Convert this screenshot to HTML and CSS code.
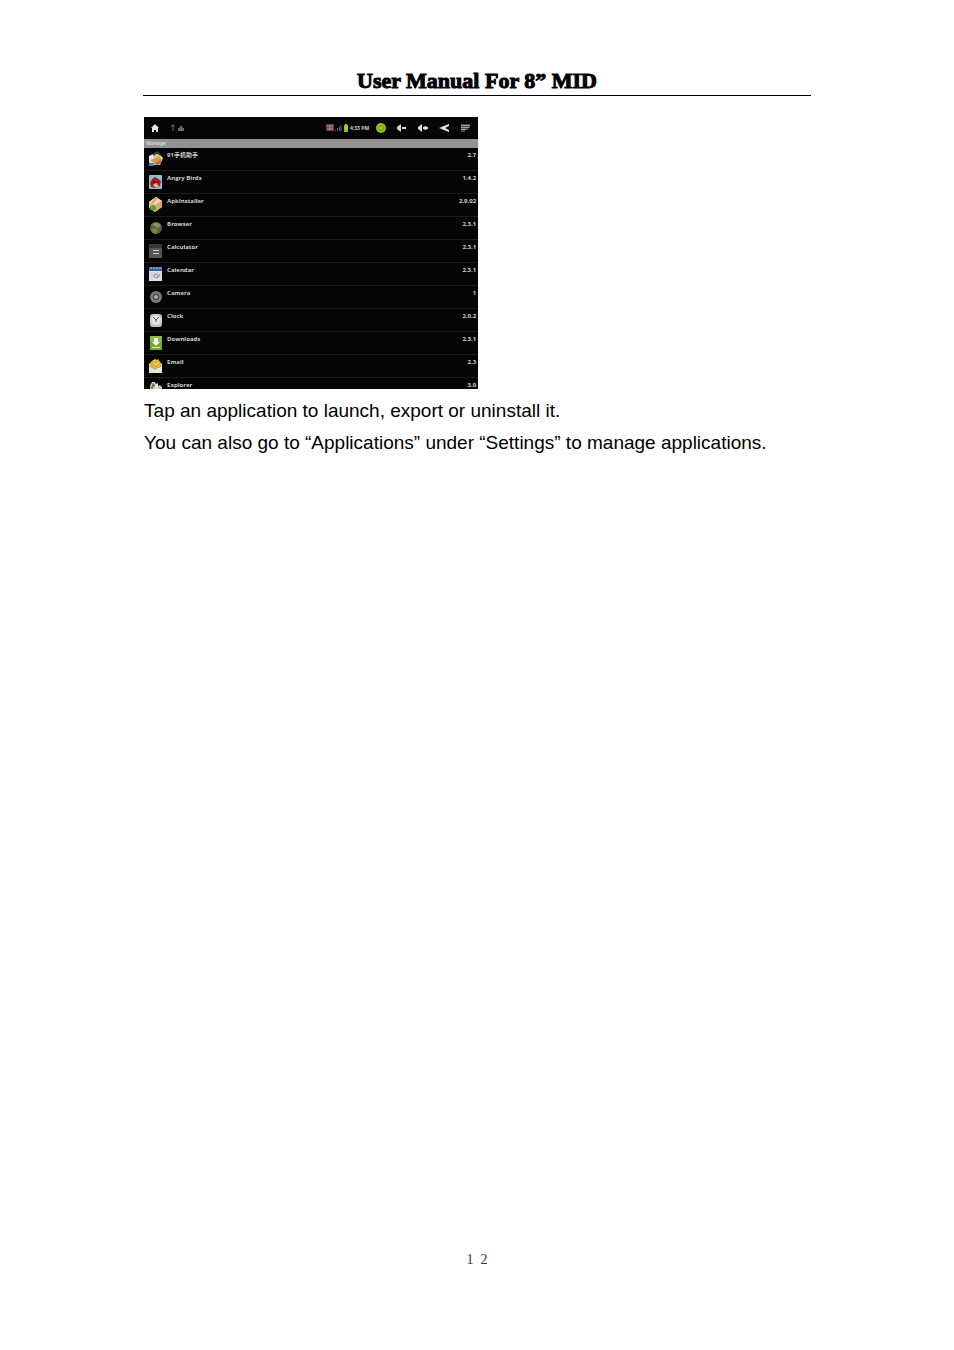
FILE: index.html
```
<!DOCTYPE html>
<html lang="en">
<head>
    <meta charset="UTF-8">
    <meta name="viewport" content="width=device-width, initial-scale=1.0">
    <title>User Manual For 8” MID</title>
    <link rel="stylesheet" href="styles.css">
</head>
<body>

    <header>
        <h1>User Manual For 8” MID</h1>
    </header>

    <main>
        <!-- Application manager -->
        <div class="screen">
            <div class="top-bar">
                <button type="button" aria-label="Home">
                    <svg viewBox="0 0 12 12"><path d="M6 2 L10 6 H9 V10 H7 V8 H5 V10 H3 V6 H2 Z" fill="#e4e4e4"/></svg>
                </button>
                <div class="notices">
                    <svg viewBox="0 0 8 12"><path d="M4 3 V9 M2 4 H6 M3 3 H5" stroke="#606060" fill="none"/></svg>
                    <svg viewBox="0 0 8 12"><path d="M4 3 L6 6 H7 V9 H1 V6 H2 Z" fill="#686868"/></svg>
                </div>
                <div class="status">
                    <svg viewBox="0 0 9 12"><rect x="1" y="2" width="8" height="7" rx="1" fill="#6b3f42"/><path d="M2 4 H8 M2 7 H8 M5 3 V8" stroke="#b08c8c"/></svg>
                    <svg viewBox="0 0 8 12"><path d="M1.500 9 V8 M3.500 9 V6 M5.500 9 V5 M7 9 V3" stroke="#666"/></svg>
                    <svg viewBox="0 0 8 12"><path d="M3 2 H5 V3 H6 V10 H2 V3 H3 Z" fill="#8cc81c"/><path d="M3 6 H5" stroke="#c5ec61"/></svg>
                    <span>4:33 PM</span>
                </div>
                <div class="controls">
                    <button type="button" aria-label="Task manager">
                        <svg viewBox="0 0 12 12"><circle cx="6" cy="6" r="5" fill="#8fc31b"/><circle cx="6" cy="6" r="2.500" fill="none" stroke="#6f9d18"/><path d="M5 6 H7" stroke="#b9dc57"/></svg>
                    </button>
                    <button type="button" aria-label="Volume down">
                        <svg viewBox="0 0 12 12"><path d="M1 5 L5 2 V10 L1 7 Z" fill="#dedede"/><path d="M6 6 H10" stroke="#dedede" stroke-width="2"/></svg>
                    </button>
                    <button type="button" aria-label="Volume up">
                        <svg viewBox="0 0 12 12"><path d="M1 5 L5 2 V10 L1 7 Z" fill="#dedede"/><path d="M6 6 H11 M8.500 4 V8" stroke="#dedede" stroke-width="2"/></svg>
                    </button>
                    <button type="button" aria-label="Back">
                        <svg viewBox="0 0 12 12"><path d="M11 2 L1 6 L11 10 V8 L7 6 L11 4 Z" fill="#e8e8e8"/></svg>
                    </button>
                    <button type="button" aria-label="Menu">
                        <svg viewBox="0 0 12 12"><path d="M2 2 H11 V6 H9 V8 H6 V10 H2 Z" fill="#4a4a4a"/><path d="M2 3.500 H11 M2 5.500 H10 M2 7.500 H7" stroke="#a0a0a0"/></svg>
                    </button>
                </div>
            </div>
            <div class="title-bar">Manage</div>
            <table>
                <tr>
                    <td class="icon"><svg viewBox="0 0 15 15"><path d="M1 5 L9 1 L15 7 L12 14 H3 L1 11 Z" fill="#dfe3e6"/><path d="M4 3 L10 0 L13 4 L8 7 Z" fill="#303b48"/><circle cx="9" cy="6" r="3" fill="#e5b981"/><path d="M2 9 L12 6 L14 9 L6 12 Z" fill="#d59b35"/><path d="M1 12 H6 V15 H1 Z" fill="#3f86bd"/><path d="M6 12 L13 9 V13 L8 14 Z" fill="#b56659"/></svg></td>
                    <td>91手机助手</td>
                    <td class="version">2.7</td>
                </tr>
                <tr>
                    <td class="icon"><svg viewBox="0 0 15 15"><rect x="1" y="1" width="13" height="14" rx="1" fill="#8fc0cc"/><path d="M2 9 L4 5 L7 3 L9 4 L13 7 L12 12 L8 14 L3 13 Z" fill="#b01727"/><path d="M5 11 L8 9 L11 12 L8 14 Z" fill="#d8bfa5"/><path d="M5 7 L8 9 L11 7" stroke="#4e1018" fill="none"/><path d="M7 9 H10 L8 11 Z" fill="#d49b2c"/></svg></td>
                    <td>Angry Birds</td>
                    <td class="version">1.4.2</td>
                </tr>
                <tr>
                    <td class="icon"><svg viewBox="0 0 15 15"><path d="M1 5 L8 0 L14 4 V10 L7 15 L1 11 Z" fill="#d8bd7e"/><path d="M1 5 L8 0 L14 4 L7 8 Z" fill="#ead8a6"/><path d="M7 8 L14 4 V10 L7 15 Z" fill="#d3aa70"/><path d="M8 0 L10 1 L5 7 L3 6 Z" fill="#d69c91"/><path d="M2 10 Q5 6 8 10 V13 H2 Z" fill="#4fa52f"/></svg></td>
                    <td>ApkInstaller</td>
                    <td class="version">2.9.02</td>
                </tr>
                <tr>
                    <td class="icon"><svg viewBox="0 0 15 15"><circle cx="8" cy="8" r="6" fill="#52653a"/><path d="M3 5 Q8 0 13 5 L10 8 L6 6 Z" fill="#868f70"/><path d="M3 9 L7 8 L10 11 L8 14 Q4 13 3 9" fill="#6e8b3e"/><path d="M4 4 L12 12" stroke="#55653f"/></svg></td>
                    <td>Browser</td>
                    <td class="version">2.3.1</td>
                </tr>
                <tr>
                    <td class="icon"><svg viewBox="0 0 15 15"><rect x="1" y="1" width="13" height="14" fill="#555"/><rect x="1" y="1" width="13" height="4" fill="#373737"/><path d="M5 7.500 H11 M5 10.500 H11" stroke="#d2d2d2"/></svg></td>
                    <td>Calculator</td>
                    <td class="version">2.3.1</td>
                </tr>
                <tr>
                    <td class="icon"><svg viewBox="0 0 15 15"><rect x="1" y="1" width="13" height="14" fill="#dce1e6"/><rect x="1" y="1" width="13" height="4" fill="#31649d"/><path d="M3 1 V3 M6 1 V3 M9 1 V3 M12 1 V3" stroke="#b9cce2"/><path d="M2 7 H13 M2 10 H13 M4 6 V14" stroke="#c8d0d9"/><circle cx="8" cy="10" r="2" fill="none" stroke="#8493a7"/><path d="M10 12 L12 8" stroke="#8493a7"/></svg></td>
                    <td>Calendar</td>
                    <td class="version">2.3.1</td>
                </tr>
                <tr>
                    <td class="icon"><svg viewBox="0 0 15 15"><circle cx="8" cy="8" r="6" fill="#777"/><circle cx="8" cy="8" r="4" fill="#464646" stroke="#868686"/><circle cx="8" cy="8" r="2" fill="#aaa"/></svg></td>
                    <td>Camera</td>
                    <td class="version">1</td>
                </tr>
                <tr>
                    <td class="icon"><svg viewBox="0 0 15 15"><rect x="2" y="2" width="12" height="13" rx="3" fill="#c4c5b8"/><circle cx="8" cy="8" r="5" fill="#e2e2d9"/><path d="M5 5 L8 8 L11 5 M8 8 V10" stroke="#55584f" fill="none"/></svg></td>
                    <td>Clock</td>
                    <td class="version">2.0.2</td>
                </tr>
                <tr>
                    <td class="icon"><svg viewBox="0 0 15 15"><rect x="2" y="1" width="12" height="14" fill="#73a72b"/><rect x="2" y="1" width="12" height="6" fill="#8cb947"/><path d="M6 3 H10 V7 H12 L8 11 L4 7 H6 Z" fill="#edf4df"/><path d="M4 12.500 H12" stroke="#dcebc1"/></svg></td>
                    <td>Downloads</td>
                    <td class="version">2.3.1</td>
                </tr>
                <tr>
                    <td class="icon"><svg viewBox="0 0 15 15"><path d="M1 6 L7 1 L14 6 V15 H1 Z" fill="#e8e5d6"/><path d="M2 5 L5 2 L7 3 L10 1 L13 5 V8 L7 11 L2 8 Z" fill="#e0b62d"/><path d="M5 4 L8 7 L11 4" stroke="#f5df73" fill="none"/><path d="M1 8 L7 11 L14 8" stroke="#aaa695" fill="none"/></svg></td>
                    <td>Email</td>
                    <td class="version">2.3</td>
                </tr>
                <tr>
                    <td class="icon"><svg viewBox="0 0 15 15"><path d="M2 5 L4 1 H7 L9 5 V13 H2 Z" fill="#c9d2bd"/><path d="M4 3 L6 2 L7 5 L5 6 Z" fill="#5b7746"/><path d="M8 3 L10 2 V9 H7 Z" fill="#e4e7df"/><path d="M10 5 L12 4 L14 6 V9 H10 Z" fill="#bec4b5"/><path d="M2 7 L5 4 V8 Z" fill="#557b38"/></svg></td>
                    <td>Explorer</td>
                    <td class="version">3.0</td>
                </tr>
            </table>
        </div>

        <p>Tap an application to launch, export or uninstall it.</p>
        <p>You can also go to “Applications” under “Settings” to manage applications.</p>
    </main>

    <footer>1&nbsp;&nbsp;2</footer>

</body>
</html>
```

FILE: styles.css
```
body {
    box-sizing: border-box;
    display: flex;
    flex-direction: column;
    min-height: 100vh;
    margin: 0;
    padding: 66px 15% 80px;
    background-color: #fff;
    color: #000;
    font-family: "Liberation Sans", Arial, sans-serif;
}
header {
    border-bottom: 1px solid #000;
    margin-bottom: 21px;
}
h1 {
    margin: 0;
    font-family: "Liberation Serif", "Times New Roman", serif;
    font-size: 22px;
    line-height: 29px;
    text-align: center;
    -webkit-text-stroke: 1px #000;
}
main {
    flex: 1;
    padding-left: 1px;
}
p {
    margin: 0;
    font-size: 19px;
    line-height: 32px;
}
footer {
    color: #333;
    font-family: "Liberation Serif", "Times New Roman", serif;
    font-size: 14px;
    line-height: 20px;
    text-align: center;
}

/* Tablet screen */
.screen {
    width: 334px;
    max-width: 100%;
    height: 272px;
    margin-bottom: 6px;
    overflow: hidden;
    background-color: #050505;
    color: #d0d0d0;
    font-family: "Open Sans", "Noto Sans CJK SC", sans-serif;
    font-size: 6px;
    font-weight: bold;
}
.screen svg {
    display: block;
    height: 12px;
}
.top-bar {
    display: flex;
    align-items: center;
    height: 22px;
    padding: 0 7px 0 5px;
}
.top-bar button {
    width: 12px;
    height: 12px;
    padding: 0;
    border: 0;
    background: none;
}
.notices {
    display: flex;
    margin-left: 8px;
}
.status {
    display: flex;
    align-items: center;
    margin-left: auto;
    margin-right: 6px;
    font-size: 5px;
}
.controls {
    display: flex;
    gap: 9px;
}
.title-bar {
    height: 9px;
    padding-left: 2px;
    background-color: #929292;
    color: #d8d8d8;
    font-size: 5px;
    line-height: 9px;
}
table {
    width: 100%;
    border-collapse: collapse;
}
td {
    height: 22px;
    padding: 0;
    border-bottom: 1px solid #1c1c1c;
    line-height: 14px;
    vertical-align: top;
}
td.icon {
    width: 19px;
    padding-left: 4px;
}
.screen .icon svg {
    width: 15px;
    height: 15px;
    margin-top: 3px;
}
.version {
    padding-right: 2px;
    text-align: right;
}
```
